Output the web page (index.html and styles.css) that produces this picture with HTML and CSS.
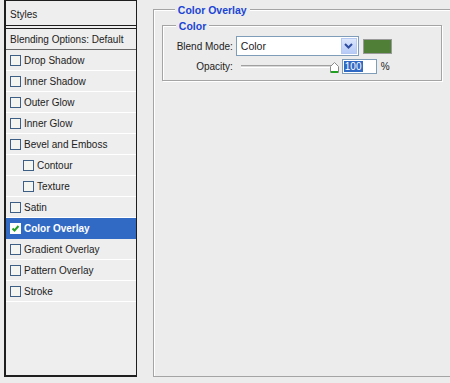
FILE: index.html
```html
<!DOCTYPE html>
<html lang="en">
<head>
  <meta charset="UTF-8">
  <title>Layer Style</title>
  <link rel="stylesheet" href="styles.css">
</head>
<body>
  <div class="layer-style">
    <div class="styles-panel">
      <div class="panel-title">Styles</div>
      <div class="blend-row">Blending Options: Default</div>
      <ul class="style-list">
        <li><span class="check"></span>Drop Shadow</li>
        <li><span class="check"></span>Inner Shadow</li>
        <li><span class="check"></span>Outer Glow</li>
        <li><span class="check"></span>Inner Glow</li>
        <li><span class="check"></span>Bevel and Emboss</li>
        <li class="sub"><span class="check"></span>Contour</li>
        <li class="sub"><span class="check"></span>Texture</li>
        <li><span class="check"></span>Satin</li>
        <li class="active">
          <span class="check checked">
            <svg width="9" height="9" viewBox="0 0 9 9"><path d="M1.5 4.5 L3.5 6.5 L7.5 2" fill="none" stroke="#21a121" stroke-width="2"/></svg>
          </span>Color Overlay
        </li>
        <li><span class="check"></span>Gradient Overlay</li>
        <li><span class="check"></span>Pattern Overlay</li>
        <li><span class="check"></span>Stroke</li>
      </ul>
    </div>

    <div class="group outer">
      <div class="group-title">Color Overlay</div>
      <div class="group inner">
        <div class="group-title">Color</div>
        <div class="field-row">
          <span class="field-label">Blend Mode:</span>
          <div class="select">
            <span class="select-value">Color</span>
            <span class="select-btn">
              <svg width="9" height="6" viewBox="0 0 9 6"><path d="M1 1 L4.5 4.5 L8 1" fill="none" stroke="#2d4da0" stroke-width="2"/></svg>
            </span>
          </div>
          <span class="swatch"></span>
        </div>
        <div class="field-row opacity-row">
          <span class="field-label">Opacity:</span>
          <div class="slider">
            <span class="track"></span>
            <svg class="thumb" width="9" height="11" viewBox="0 0 9 11">
              <path d="M0.5 4.5 L4.5 0.5 L8.5 4.5 L8.5 10.5 L0.5 10.5 Z" fill="#fff" stroke="#8a8a8a"/>
              <path d="M1 10 L8 10" stroke="#22a022" stroke-width="2"/>
            </svg>
          </div>
          <div class="num-input"><span class="selected">100</span></div>
          <span class="unit">%</span>
        </div>
      </div>
    </div>
  </div>
</body>
</html>
```

FILE: styles.css
```css
* {
  box-sizing: border-box;
  margin: 0;
  padding: 0;
}

body {
  background: #ececec;
  font-family: "Liberation Sans", Arial, sans-serif;
  font-size: 10px;
  color: #222;
  overflow: hidden;
}

.layer-style {
  display: flex;
  align-items: flex-start;
  width: 470px;
}

/* left list of styles */
.styles-panel {
  margin-left: 4px;
  width: 134px;
  height: 377px;
  border: 1px solid #1e1e1e;
  border-left-width: 2px;
  border-bottom-width: 2px;
  background: #eeeeee;
}

.panel-title {
  height: 25px;
  line-height: 27px;
  padding-left: 4px;
  border-bottom: 1px solid #1e1e1e;
}

.blend-row {
  margin-top: 2px;
  height: 22px;
  line-height: 21px;
  padding-left: 4px;
  border-top: 1px solid #1e1e1e;
  border-bottom: 1px solid #6a6a6a;
}

.style-list {
  list-style: none;
}

.style-list li {
  display: flex;
  align-items: center;
  height: 21px;
  padding-left: 4px;
  border-bottom: 1px solid #fff;
}

.style-list li.sub {
  padding-left: 17px;
}

.check {
  width: 11px;
  height: 11px;
  margin-right: 3px;
  border: 1px solid #3e5f85;
  background: #f4f4f0;
  display: flex;
  align-items: center;
  justify-content: center;
}

.style-list li.active {
  background: #316ac5;
  color: #fff;
  font-weight: bold;
  border-bottom-color: #316ac5;
}

.check.checked {
  background: #fff;
  border-color: #fff;
}

/* right group boxes */
.group {
  border: 1px solid #a4a4a4;
  box-shadow: inset 1px 1px 0 #fff, 1px 1px 0 #fff;
}

.group.outer {
  margin-left: 16px;
  margin-top: 9px;
  width: 320px;
  height: 368px;
  padding-left: 8px;
}

.group-title {
  width: fit-content;
  margin-top: -6px;
  margin-left: 13px;
  padding: 0 3px;
  height: 12px;
  line-height: 12px;
  background: #ececec;
  color: #1b44d6;
  font-weight: bold;
  font-size: 10.5px;
}

.group.inner {
  margin-top: 9px;
  width: 280px;
  height: 56px;
}

.field-row {
  display: flex;
  align-items: center;
  margin-top: 4px;
}

.field-label {
  width: 70px;
  text-align: right;
  margin-right: 3px;
}

.select {
  display: flex;
  align-items: stretch;
  width: 123px;
  height: 20px;
  border: 1px solid #7f9db9;
  background: #fff;
  padding: 1px;
}

.select-value {
  flex: 1;
  line-height: 17px;
  padding-left: 3px;
  font-size: 10.5px;
}

.select-btn {
  width: 16px;
  display: flex;
  align-items: center;
  justify-content: center;
  background: linear-gradient(#dce6fc, #b7cbf7);
  border: 1px solid #b5c8f2;
}

.swatch {
  margin-left: 4px;
  width: 29px;
  height: 15px;
  background: #507f37;
  border: 1px solid #9a9a9a;
}

.opacity-row {
  margin-top: 3px;
  height: 15px;
}

.slider {
  display: flex;
  align-items: center;
  width: 98px;
  margin-left: 5px;
  height: 15px;
}

.track {
  width: 91px;
  height: 3px;
  border-top: 1px solid #a0a0a0;
  border-bottom: 1px solid #fff;
  background: #d8d8d8;
}

.thumb {
  margin-left: -2px;
  margin-top: 2px;
}

.num-input {
  margin-left: 3px;
  width: 35px;
  height: 15px;
  border: 1px solid #7f9db9;
  background: #fff;
  padding-left: 1px;
  line-height: 13px;
}

.num-input .selected {
  background: #316ac5;
  color: #fff;
  padding: 0 1px;
}

.unit {
  margin-left: 4px;
}
```
